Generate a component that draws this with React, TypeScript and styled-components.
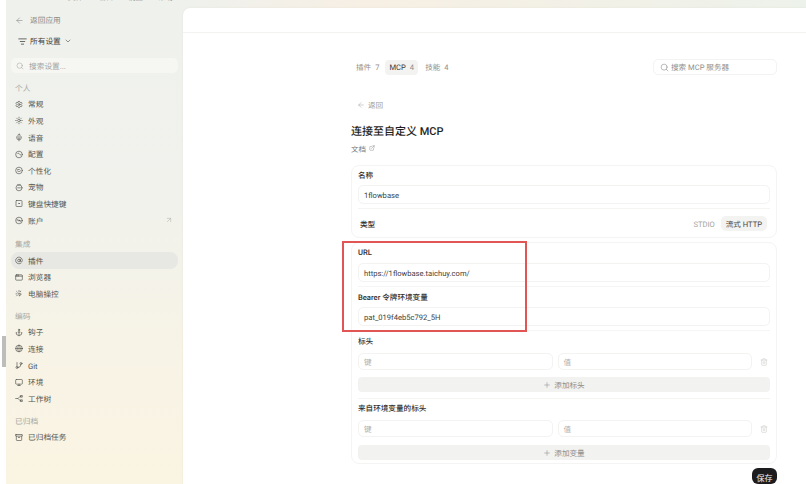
import React from "react";
import styled, { createGlobalStyle } from "styled-components";
import {
  Anchor, AppWindow, Archive, ArrowLeft, ArrowUpRight, AtSign, ChevronDown, Disc3, ExternalLink,
  GitBranch, Globe, ListFilter, Mic, Monitor, Plus, Search, Settings, SquareDot, Sun, Trash2,
} from "lucide-react";

const Global = createGlobalStyle`
  html, body { margin: 0; padding: 0; background: #fff; }
  body { font-family: Roboto, "Noto Sans CJK SC", "Noto Sans", sans-serif; text-rendering: geometricPrecision; }
  * { box-sizing: border-box; }
`;

const Page = styled.div`
  position: relative; width: 806px; height: 484px; overflow: hidden;
  padding-left: 6px; background: #fff;
`;
const Win = styled.div`
  display: flex; height: 100%;
  background:
    linear-gradient(90deg, #eff1ed 22%, #f7efe4 45%, #edf2ea 100%) top / 100% 8px no-repeat,
    linear-gradient(180deg, #eff1ed 0%, #f1f2ec 42%, #f7f3e6 72%, #faf4e2 100%);
`;
const TopMenu = styled.div`
  position: absolute; left: 68px; top: -7px; display: flex; gap: 15px;
  font-size: 7.5px; line-height: 10px; color: #77776f;
`;
const Sidebar = styled.aside`
  width: 177px; flex: none; padding: 12px 5px 0; color: #55554f; font-size: 7.7px;
`;
const BackRow = styled.div`
  display: flex; align-items: center; gap: 6px; height: 16px; padding: 1px 0 0 4px; color: #8c8c86;
  svg { margin-top: -1px; }
`;
const ScopeRow = styled.div`
  display: flex; align-items: center; gap: 3px; height: 16px; margin-top: 5px; padding: 0 0 0 7px; color: #3f3f3b;
`;
const SearchBar = styled.div`
  display: flex; align-items: center; gap: 5px; height: 15px; margin-top: 9px; padding: 1px 0 0 5px;
  background: #f6f7f3; border-radius: 5px; color: #a5a5a0;
  svg { margin-top: -1px; }
`;
const GroupLabel = styled.div<{ $top: number }>`
  height: 16px; line-height: 18px; margin-top: ${(p) => p.$top}px; padding-left: 4px; color: #a8a8a2;
`;
const Item = styled.div<{ $active?: boolean }>`
  display: flex; align-items: center; gap: 5px; height: 16.6px; padding: 0 5px 0 4px;
  border-radius: 8px; background: ${(p) => (p.$active ? "#e7e8e3" : "transparent")};
`;
const ItemText = styled.span`
  flex: 1; line-height: 1; padding-top: 2px;
`;
const IconBox = styled.span`
  display: inline-flex; align-items: center; justify-content: center; width: 8px; height: 9px; flex: none;
  svg { display: block; }
`;
const Main = styled.main`
  flex: 1; margin-top: 8px; background: #fff; border-top-left-radius: 7px; min-width: 0;
  box-shadow: 0 0 2px rgba(90, 90, 70, 0.1);
`;
const Head = styled.header`
  height: 25px; border-bottom: 1px solid #f3f3f1;
`;
const Content = styled.div`
  width: 426px; margin-left: 168px; font-size: 7.6px; color: #3a3a38;
`;
const TabRow = styled.div`
  display: flex; align-items: center; justify-content: space-between; height: 16px; margin-top: 26px;
`;
const Tabs = styled.div`
  display: flex; align-items: center; gap: 7px; padding-left: 5px;
`;
const Tab = styled.span<{ $active?: boolean }>`
  height: 15px; line-height: 16px; border-radius: 4px; white-space: nowrap;
  padding: ${(p) => (p.$active ? "0 4px 0 4px" : "0")};
  margin-left: ${(p) => (p.$active ? "-1px" : "0")};
  background: ${(p) => (p.$active ? "#f3f3f2" : "transparent")};
  color: ${(p) => (p.$active ? "#3a3a38" : "#8f8f8c")};
`;
const TabCount = styled.span`
  color: #8f8f8c; margin-left: 4px;
`;
const ServerSearch = styled.div`
  display: flex; align-items: center; gap: 2px; width: 124px; height: 16px; padding: 1px 0 0 6px;
  border: 1px solid #f3f3f2; border-radius: 5px; color: #8f8f8c;
  svg { margin-top: -1px; }
`;
const Back = styled.div`
  display: flex; align-items: center; gap: 3px; height: 16px; margin-top: 22px; padding: 0 0 0 6px; color: #a0a09c;
`;
const Title = styled.h1`
  margin: 10px 0 0; height: 16px; line-height: 18px; font-size: 11px; font-weight: 500; color: #1f1f1e;
`;
const Docs = styled.div`
  display: flex; align-items: center; gap: 3px; height: 12px; margin-top: 3px; padding-top: 2px; font-size: 7.5px; color: #77777a;
  svg { margin-top: -2px; }
`;
const Card = styled.section<{ $top: number }>`
  margin-top: ${(p) => p.$top}px; padding: 0 6px; width: 426px;
  border: 1px solid #f4f4f3; border-radius: 8px;
`;
const Section = styled.div<{ $top: number; $bottom: number; $line?: boolean }>`
  padding-top: ${(p) => p.$top}px; padding-bottom: ${(p) => p.$bottom}px;
  border-bottom: ${(p) => (p.$line ? "1px solid #f5f5f4" : "none")};
`;
const Label = styled.div<{ $gap: number }>`
  height: 14px; line-height: 15px; margin-bottom: ${(p) => p.$gap}px; font-weight: 500; color: #2e2e2c;
`;
const Field = styled.div<{ $muted?: boolean }>`
  display: flex; align-items: center; flex: 1; height: 19px; padding: 2px 0 0 5px; min-width: 0;
  border: 1px solid #f3f3f2; border-radius: 5px; color: ${(p) => (p.$muted ? "#b0b0ad" : "#3f3f3d")};
`;
const PairRow = styled.div`
  display: flex; align-items: center; gap: 5px; height: 17px;
  ${Field} { height: 17px; }
`;
const TrashSlot = styled.span`
  display: inline-flex; justify-content: center; width: 13px; color: #c9c9c6;
`;
const AddButton = styled.div<{ $top: number }>`
  display: flex; align-items: center; justify-content: center; gap: 3px; height: 15px; margin-top: ${(p) => p.$top}px;
  padding-top: 1px; background: #f2f2f1; border-radius: 4px; color: #8e8e8b;
  svg { margin-top: -1px; }
`;
const TypeRow = styled.div`
  display: flex; align-items: center; justify-content: space-between; height: 28px; padding: 0 3px 0 2px;
`;
const TypeLabel = styled.span`
  padding-top: 2px; font-weight: 500; color: #2e2e2c;
`;
const Segments = styled.div`
  display: flex; align-items: center; gap: 6px; color: #a5a5a2;
`;
const SegmentText = styled.span`
  padding-top: 2px;
`;
const Segment = styled.span`
  height: 15px; line-height: 17px; padding: 0 5px; border-radius: 5px; background: #f3f3f2; color: #4a4a48;
`;
const Footer = styled.div`
  display: flex; justify-content: flex-end; margin-top: 4px;
`;
const Save = styled.button`
  width: 25px; height: 16px; padding: 2px 0 0; border: 0; border-radius: 6px; background: #1d1d1f;
  color: #f2f2f2; font: inherit; font-size: 8px;
`;
const Highlight = styled.div`
  position: absolute; left: 342px; top: 241px; width: 185px; height: 91px;
  border: 2px solid #e25555; pointer-events: none;
`;
const ScrollThumb = styled.div`
  position: absolute; left: 2px; top: 336px; width: 4px; height: 31px; background: #bdbdbb;
`;

const stroke = { fill: "none", stroke: "currentColor", strokeWidth: 2, strokeLinecap: "round" as const, strokeLinejoin: "round" as const };
const Drawn = ({ children }: { children: React.ReactNode }) => (
  <svg width={9} height={9} viewBox="0 0 24 24" {...stroke}>{children}</svg>
);
const ProfileIcon = () => <Drawn><circle cx="12" cy="12" r="10" /><path d="M7 10c2-3 5-2 6 0s3 4 4 4" /></Drawn>;
const PersonalIcon = () => <Drawn><circle cx="12" cy="12" r="10" /><path d="M7 13c2 3 7 3 10 0M8 9h5" /></Drawn>;
const PetIcon = () => <Drawn><circle cx="12" cy="13" r="9" /><path d="M8 3l4 2 4-2M8 13h8" /></Drawn>;
const SparkIcon = () => <Drawn><path d="M12 3v3M5 6l2 2M17 5l-1 2M3 13h3M12 11l7 3-3 2-2 3z" /><path d="M7 17l-2 2" /></Drawn>;
const TreeIcon = () => <Drawn><path d="M2 12h7l6-6h3M9 12l6 6h3" /><rect x="17" y="3" width="5" height="5" /><rect x="17" y="16" width="5" height="5" /></Drawn>;

const lu = (C: React.ComponentType<{ size?: number; strokeWidth?: number }>) => <C size={9} strokeWidth={2} />;

type Entry = { label: string; icon: React.ReactNode; active?: boolean; arrow?: boolean };
const groups: { title: string; top: number; items: Entry[] }[] = [
  { title: "个人", top: 7, items: [
    { label: "常规", icon: lu(Settings) }, { label: "外观", icon: lu(Sun) }, { label: "语音", icon: lu(Mic) },
    { label: "配置", icon: <ProfileIcon /> }, { label: "个性化", icon: <PersonalIcon /> }, { label: "宠物", icon: <PetIcon /> },
    { label: "键盘快捷键", icon: lu(SquareDot) }, { label: "账户", icon: lu(Disc3), arrow: true },
  ] },
  { title: "集成", top: 7.5, items: [
    { label: "插件", icon: lu(AtSign), active: true }, { label: "浏览器", icon: lu(AppWindow) }, { label: "电脑操控", icon: <SparkIcon /> },
  ] },
  { title: "编码", top: 6, items: [
    { label: "钩子", icon: lu(Anchor) }, { label: "连接", icon: lu(Globe) }, { label: "Git", icon: lu(GitBranch) },
    { label: "环境", icon: lu(Monitor) }, { label: "工作树", icon: <TreeIcon /> },
  ] },
  { title: "已归档", top: 6, items: [{ label: "已归档任务", icon: lu(Archive) }] },
];

const Pair = () => (
  <PairRow>
    <Field $muted>键</Field>
    <Field $muted>值</Field>
    <TrashSlot><Trash2 size={8} strokeWidth={1.6} /></TrashSlot>
  </PairRow>
);

export default function App() {
  return (
    <Page>
      <Global />
      <Win>
        <Sidebar>
          <BackRow><ArrowLeft size={9} strokeWidth={1.6} />返回应用</BackRow>
          <ScopeRow><ListFilter size={9} strokeWidth={2} />所有设置<ChevronDown size={8} strokeWidth={1.6} /></ScopeRow>
          <SearchBar><Search size={8} strokeWidth={1.6} />搜索设置...</SearchBar>
          {groups.map((g) => (
            <div key={g.title}>
              <GroupLabel $top={g.top}>{g.title}</GroupLabel>
              {g.items.map((it) => (
                <Item key={it.label} $active={it.active}>
                  <IconBox>{it.icon}</IconBox>
                  <ItemText>{it.label}</ItemText>
                  {it.arrow && <ArrowUpRight size={8} strokeWidth={1.4} color="#a8a8a2" />}
                </Item>
              ))}
            </div>
          ))}
        </Sidebar>
        <Main>
          <Head />
          <Content>
            <TabRow>
              <Tabs>
                <Tab>插件<TabCount>7</TabCount></Tab>
                <Tab $active>MCP<TabCount>4</TabCount></Tab>
                <Tab>技能<TabCount>4</TabCount></Tab>
              </Tabs>
              <ServerSearch><Search size={9} strokeWidth={1.6} />搜索 MCP 服务器</ServerSearch>
            </TabRow>
            <Back><ArrowLeft size={8} strokeWidth={1.5} />返回</Back>
            <Title>连接至自定义 MCP</Title>
            <Docs>文档<ExternalLink size={6} strokeWidth={1.6} /></Docs>
            <Card $top={11}>
              <Section $top={2} $bottom={4} $line>
                <Label $gap={3}>名称</Label>
                <Field>1flowbase</Field>
              </Section>
              <TypeRow>
                <TypeLabel>类型</TypeLabel>
                <Segments><SegmentText>STDIO</SegmentText><Segment>流式 HTTP</Segment></Segments>
              </TypeRow>
            </Card>
            <Card $top={4}>
              <Section $top={2} $bottom={4} $line>
                <Label $gap={4}>URL</Label>
                <Field>https://1flowbase.taichuy.com/</Field>
              </Section>
              <Section $top={3} $bottom={4} $line>
                <Label $gap={3}>Bearer 令牌环境变量</Label>
                <Field>pat_019f4eb5c792_5H</Field>
              </Section>
              <Section $top={3} $bottom={6} $line>
                <Label $gap={5}>标头</Label>
                <Pair />
                <AddButton $top={7}><Plus size={8} strokeWidth={1.6} />添加标头</AddButton>
              </Section>
              <Section $top={2} $bottom={3}>
                <Label $gap={5}>来自环境变量的标头</Label>
                <Pair />
                <AddButton $top={8}><Plus size={8} strokeWidth={1.6} />添加变量</AddButton>
              </Section>
            </Card>
            <Footer><Save>保存</Save></Footer>
          </Content>
        </Main>
      </Win>
      <TopMenu><span>文件</span><span>编辑</span><span>视图</span><span>帮助</span></TopMenu>
      <ScrollThumb />
      <Highlight />
    </Page>
  );
}
